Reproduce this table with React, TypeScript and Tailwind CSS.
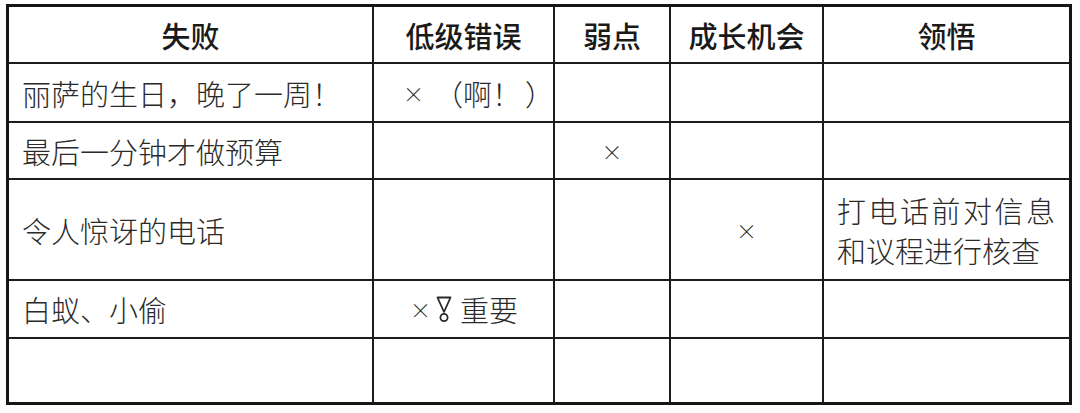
import React from "react";

const font = { fontFamily: '"Noto Sans CJK SC", "Noto Sans", sans-serif' };

function Cell({
  children,
  align = "left",
  head = false,
}: {
  children?: React.ReactNode;
  align?: "left" | "center" | "none";
  head?: boolean;
}) {
  return (
    <div
      className={
        "bg-white flex items-center text-[29px] leading-[40px] " +
        (align === "center" ? "justify-center " : align === "left" ? "justify-start pl-[13px] " : "justify-start ") +
        (head ? "font-medium text-[#1a1a1a]" : "font-light text-[#2a2a2a]")
      }
    >
      {children}
    </div>
  );
}

function X() {
  return <span className="font-light text-[21px] leading-[40px]">×</span>;
}

function Bang() {
  return (
    <svg width="16" height="28" viewBox="0 0 16 28" className="block">
      <polygon points="1.5,2.5 14.5,2.5 8,17" fill="none" stroke="#2a2a2a" strokeWidth="1.8" strokeLinejoin="round" />
      <circle cx="8" cy="22.5" r="3.6" fill="none" stroke="#2a2a2a" strokeWidth="1.8" />
    </svg>
  );
}

export default function App() {
  return (
    <div className="w-[1080px] h-[413px] bg-white overflow-hidden" style={font}>
      <div className="ml-[6px] mt-[4px] inline-block border-[3px] border-[#161616] bg-[#1c1c1c]">
        <div className="grid grid-cols-[363px_179px_114px_151px_245px] grid-rows-[55px_57px_55px_99px_56px_63px] gap-[2px]">
          <Cell align="center" head>失败</Cell>
          <Cell align="center" head>低级错误</Cell>
          <Cell align="center" head>弱点</Cell>
          <Cell align="center" head>成长机会</Cell>
          <Cell align="center" head>领悟</Cell>

          <Cell>丽萨的生日，晚了一周！</Cell>
          <Cell align="none">
            <span className="flex items-center pl-[29px]">
              <X />
              <span className="ml-[10px]">（啊！</span>
              <span className="ml-[4px]">）</span>
            </span>
          </Cell>
          <Cell />
          <Cell />
          <Cell />

          <Cell>最后一分钟才做预算</Cell>
          <Cell />
          <Cell align="center"><X /></Cell>
          <Cell />
          <Cell />

          <Cell>令人惊讶的电话</Cell>
          <Cell />
          <Cell />
          <Cell align="center"><X /></Cell>
          <Cell>
            <div className="flex flex-col">
              <span className="tracking-[2.5px]">打电话前对信息</span>
              <span>和议程进行核查</span>
            </div>
          </Cell>

          <Cell>白蚁、小偷</Cell>
          <Cell align="none">
            <span className="flex items-center pl-[36px]">
              <X />
              <span className="ml-[5px]"><Bang /></span>
              <span className="ml-[8px]">重要</span>
            </span>
          </Cell>
          <Cell />
          <Cell />
          <Cell />

          <Cell />
          <Cell />
          <Cell />
          <Cell />
          <Cell />
        </div>
      </div>
    </div>
  );
}
